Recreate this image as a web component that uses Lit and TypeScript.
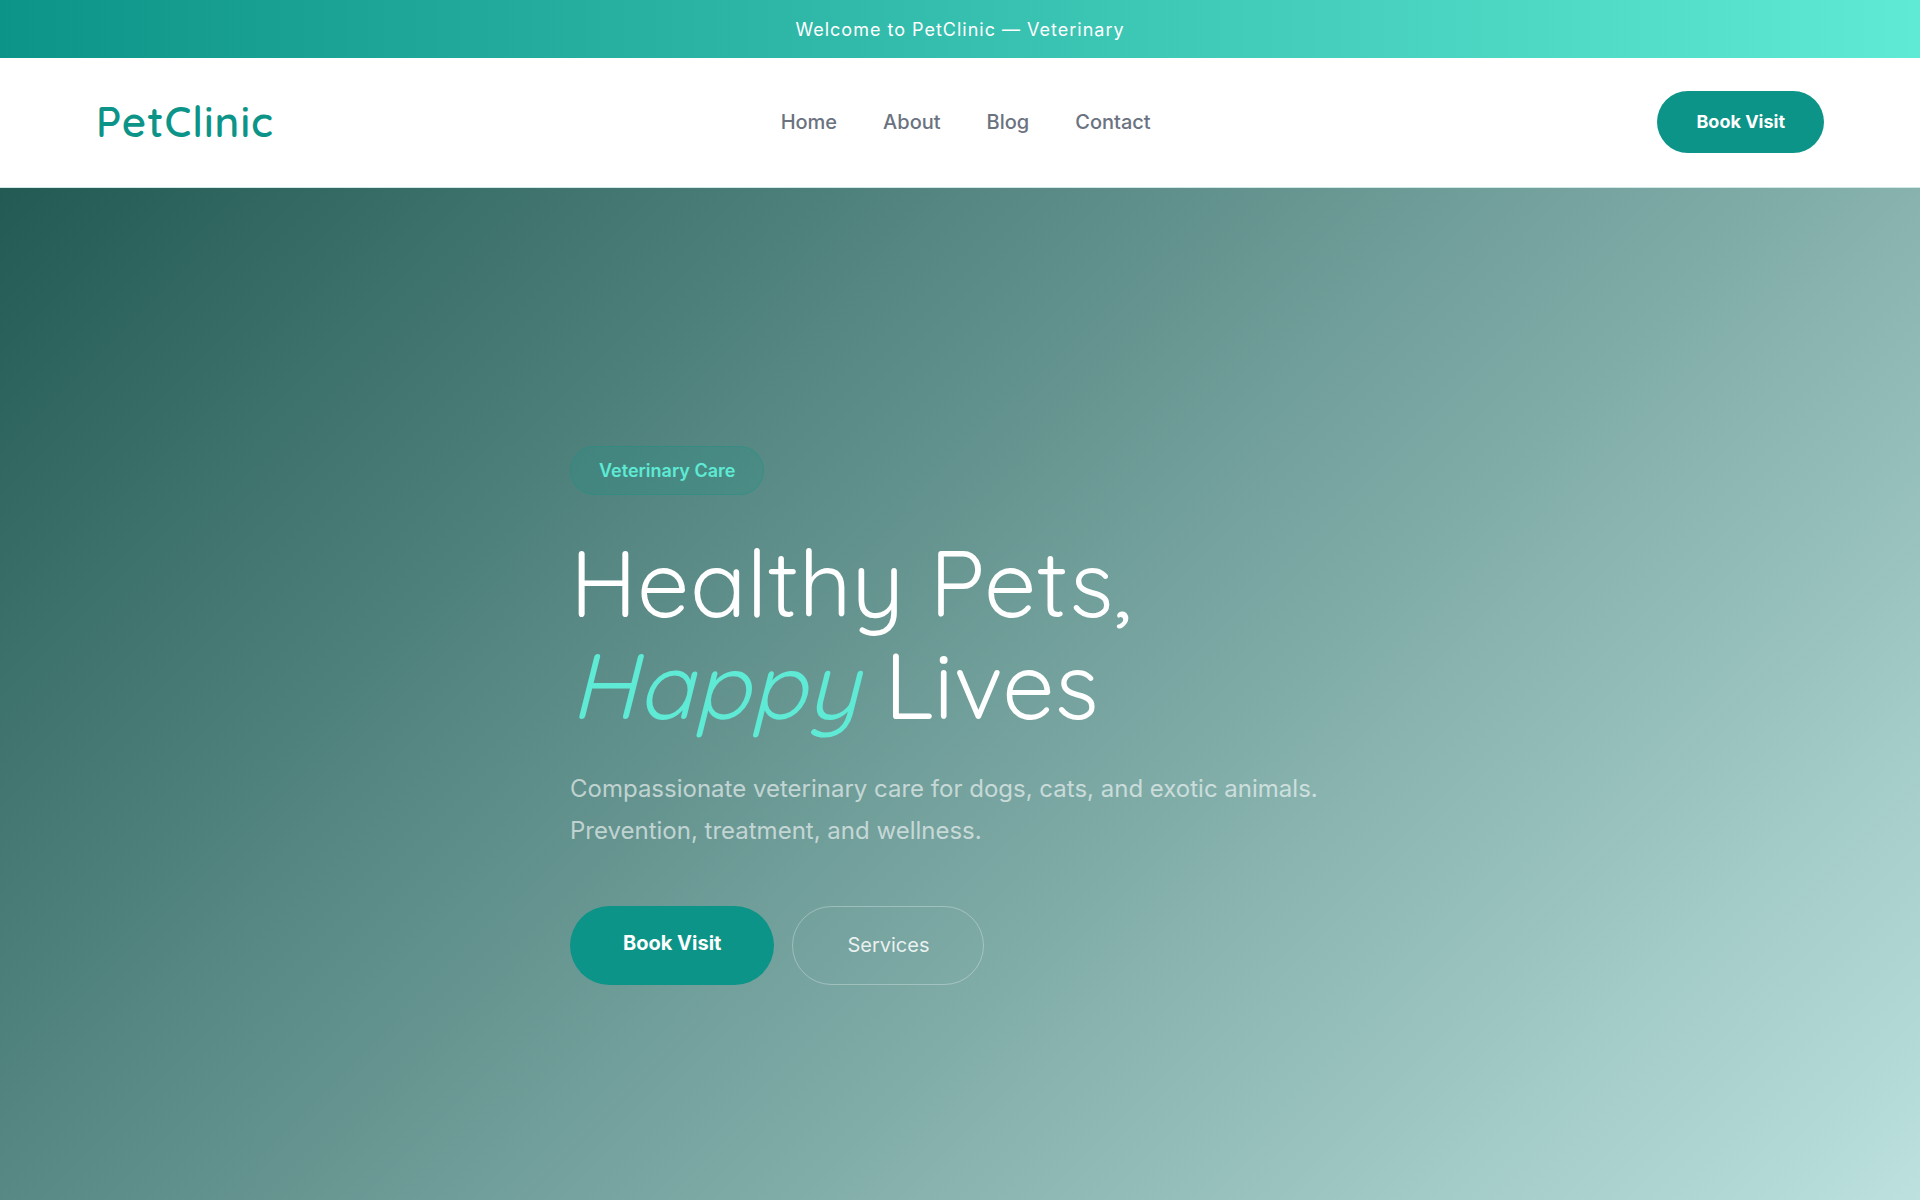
import { LitElement, html, css } from "lit";
import { customElement } from "lit/decorators.js";

const NAV_ITEMS = ["Home", "About", "Blog", "Contact"];

@customElement("app-root")
export class AppRoot extends LitElement {
  static styles = css`
    :host {
      display: flex;
      flex-direction: column;
      min-height: 100vh;
      background: #ffffff;
      font-family: Inter, "Liberation Sans", sans-serif;
      --teal: #0d9488;
      --mint: #5eead4;
      --display: Quicksand, Comfortaa, Nunito, Lato, sans-serif;
    }
    a {
      text-decoration: none;
    }
    .announcement {
      margin: 0;
      padding: 17px 16px 15px;
      background: linear-gradient(90deg, var(--teal), var(--mint));
      color: #ffffff;
      font-size: 18px;
      line-height: 26px;
      letter-spacing: 1px;
      text-align: center;
    }
    .header {
      display: flex;
      align-items: center;
      justify-content: space-between;
      padding: 33px 96px 34px;
      border-bottom: 1px solid #cfe9e6;
    }
    .logo {
      color: var(--teal);
      font-family: var(--display);
      font-size: 42px;
      line-height: 52px;
      font-weight: 600;
      letter-spacing: 1px;
    }
    .nav {
      display: flex;
      gap: 46px;
    }
    .nav-link {
      color: #6b7280;
      font-size: 20px;
      line-height: 30px;
      font-weight: 500;
    }
    .button {
      border: 0;
      border-radius: 50px;
      background: var(--teal);
      color: #ffffff;
      font-family: inherit;
      font-weight: 700;
      cursor: pointer;
    }
    .button-small {
      padding: 16px 39px;
      font-size: 18px;
      line-height: 30px;
    }
    .hero {
      flex: 1;
      display: flex;
      flex-direction: column;
      justify-content: center;
      padding: 64px 48px 22px;
      background: linear-gradient(135deg, #235a54, #bce1de);
    }
    .content {
      width: 100%;
      max-width: 780px;
      margin: 0 auto;
    }
    .badge {
      display: inline-block;
      padding: 10px 28px;
      border: 1px solid rgba(13, 148, 136, 0.3);
      border-radius: 50px;
      background: rgba(13, 148, 136, 0.2);
      color: var(--mint);
      font-size: 18px;
      line-height: 27px;
      font-weight: 600;
    }
    .title {
      margin: 36px 0 33px;
      color: #ffffff;
      font-family: var(--display);
      font-size: 93px;
      line-height: 102px;
      font-weight: 400;
    }
    .accent {
      color: var(--mint);
      font-style: italic;
    }
    .lead {
      margin: 0 0 54px;
      color: rgba(255, 255, 255, 0.6);
      font-size: 24px;
      line-height: 42px;
    }
    .actions {
      display: flex;
      gap: 18px;
    }
    .button-large {
      padding: 22px 53px 26px;
      font-size: 20px;
      line-height: 31px;
    }
    .button-outline {
      padding: 23px 54px;
      border: 1px solid rgba(255, 255, 255, 0.3);
      background: transparent;
      color: rgba(255, 255, 255, 0.85);
      font-size: 20px;
      line-height: 31px;
      font-weight: 400;
    }
  `;

  render() {
    return html`
      <p class="announcement">Welcome to PetClinic — Veterinary</p>
      <header class="header">
        <a class="logo" href="#home">PetClinic</a>
        <nav class="nav" aria-label="Main">
          ${NAV_ITEMS.map(
            (item) => html`<a class="nav-link" href="#${item.toLowerCase()}">${item}</a>`
          )}
        </nav>
        <button class="button button-small" type="button">Book Visit</button>
      </header>
      <main class="hero">
        <div class="content">
          <span class="badge">Veterinary Care</span>
          <h1 class="title">Healthy Pets,<br /><em class="accent">Happy</em> Lives</h1>
          <p class="lead">
            Compassionate veterinary care for dogs, cats, and exotic animals. Prevention, treatment, and wellness.
          </p>
          <div class="actions">
            <button class="button button-large" type="button">Book Visit</button>
            <button class="button button-outline" type="button">Services</button>
          </div>
        </div>
      </main>
    `;
  }
}
